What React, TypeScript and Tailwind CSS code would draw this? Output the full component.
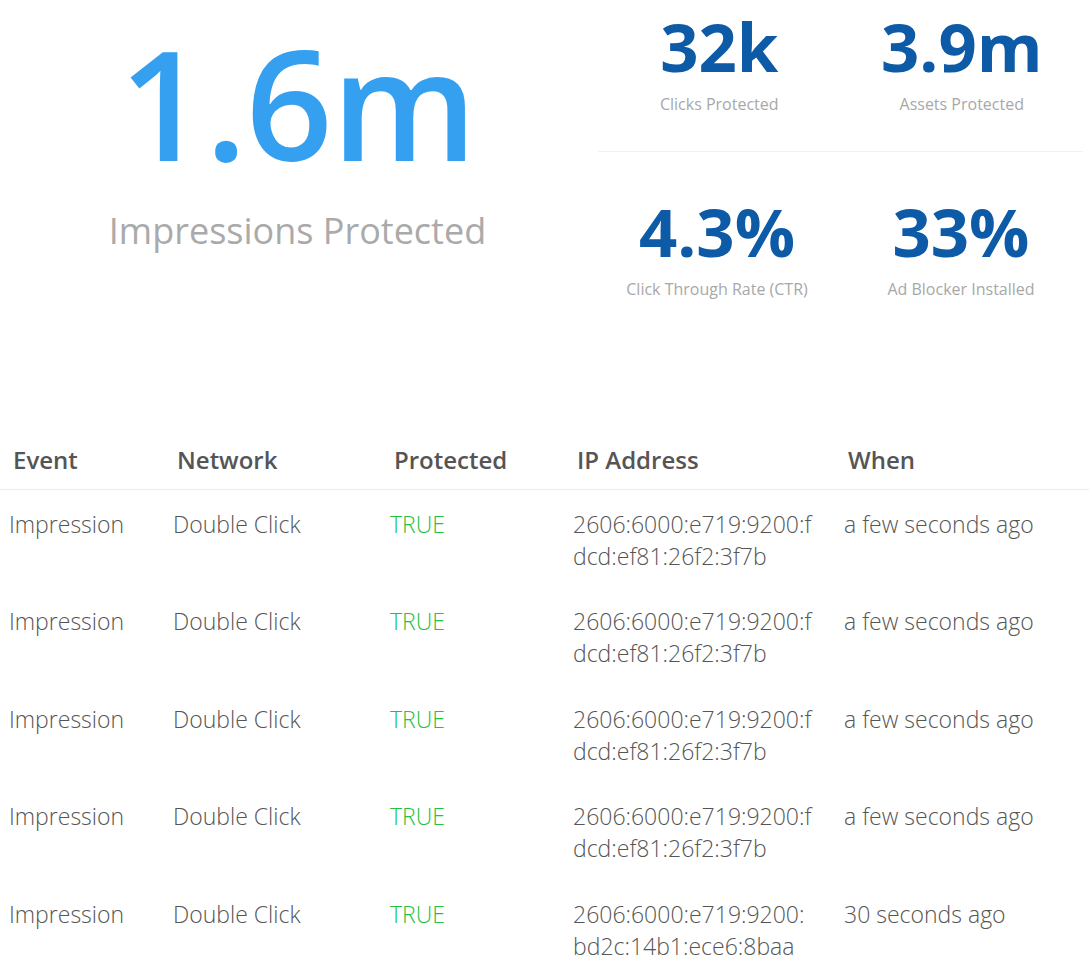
const stats = [
  [
    { value: "32k", label: "Clicks Protected" },
    { value: "3.9m", label: "Assets Protected" },
  ],
  [
    { value: "4.3%", label: "Click Through Rate (CTR)" },
    { value: "33%", label: "Ad Blocker Installed" },
  ],
];

interface EventRow {
  event: string;
  network: string;
  protected: boolean;
  ip: string;
  when: string;
}

const rows: EventRow[] = [
  { event: "Impression", network: "Double Click", protected: true, ip: "2606:6000:e719:9200:fdcd:ef81:26f2:3f7b", when: "a few seconds ago" },
  { event: "Impression", network: "Double Click", protected: true, ip: "2606:6000:e719:9200:fdcd:ef81:26f2:3f7b", when: "a few seconds ago" },
  { event: "Impression", network: "Double Click", protected: true, ip: "2606:6000:e719:9200:fdcd:ef81:26f2:3f7b", when: "a few seconds ago" },
  { event: "Impression", network: "Double Click", protected: true, ip: "2606:6000:e719:9200:fdcd:ef81:26f2:3f7b", when: "a few seconds ago" },
  { event: "Impression", network: "Double Click", protected: true, ip: "2606:6000:e719:9200:bd2c:14b1:ece6:8baa", when: "30 seconds ago" },
];

function Stat({ value, label }: { value: string; label: string }) {
  return (
    <div className="flex flex-col items-center">
      <div className="h-[70px] flex items-center text-[67px] leading-[70px] font-bold text-[#0d5aa6]">{value}</div>
      <div className="mt-[11px] text-[16px] leading-6 text-[#a8a8a8]">{label}</div>
    </div>
  );
}

export default function App() {
  return (
    <div className="w-[1089px] h-[979px] overflow-hidden bg-white font-['Open_Sans',sans-serif]">
      <div className="flex h-[444px]">
        <div className="w-[595px] flex flex-col items-center pt-[27px]">
          <div className="text-[152px] leading-none font-semibold text-[#35a0f0] tracking-[-1px]">1.6m</div>
          <div className="mt-[34px] text-[36px] leading-none text-[#aaaaaa]">Impressions Protected</div>
        </div>
        <div className="w-[488px]">
          <div className="grid grid-cols-2 pt-[11px] h-[152px] border-b border-[#f0f0f0] ml-[3px]">
            {stats[0].map((s) => (
              <Stat key={s.label} {...s} />
            ))}
          </div>
          <div className="grid grid-cols-2 pt-[44px]">
            {stats[1].map((s) => (
              <Stat key={s.label} {...s} />
            ))}
          </div>
        </div>
      </div>

      <table className="table-fixed w-full border-collapse text-left text-[#555555]">
        <thead>
          <tr className="border-b border-[#e9edf1]">
            <th className="w-[164px] pl-[13px] pb-[13px] text-[24px] leading-8 font-semibold">Event</th>
            <th className="w-[217px] pl-[13px] pb-[13px] text-[24px] leading-8 font-semibold">Network</th>
            <th className="w-[183px] pl-[13px] pb-[13px] text-[24px] leading-8 font-semibold">Protected</th>
            <th className="w-[271px] pl-[13px] pb-[13px] text-[24px] leading-8 font-semibold">IP Address</th>
            <th className="pl-[13px] pb-[13px] text-[24px] leading-8 font-semibold">When</th>
          </tr>
        </thead>
        <tbody className="text-[23px] leading-8 font-light">
          {rows.map((r, i) => (
            <tr key={i} className="align-top">
              <td className="pl-[9px] pt-[17.5px] pb-[16px]">{r.event}</td>
              <td className="pl-[9px] pt-[17.5px] pb-[16px]">{r.network}</td>
              <td className="pl-[9px] pt-[17.5px] pb-[16px] text-[#22c143]">{r.protected ? "TRUE" : "FALSE"}</td>
              <td className="pl-[9px] pr-[18px] pt-[17.5px] pb-[16px] break-all">{r.ip}</td>
              <td className="pl-[9px] pt-[17.5px] pb-[16px]">{r.when}</td>
            </tr>
          ))}
        </tbody>
      </table>
    </div>
  );
}
